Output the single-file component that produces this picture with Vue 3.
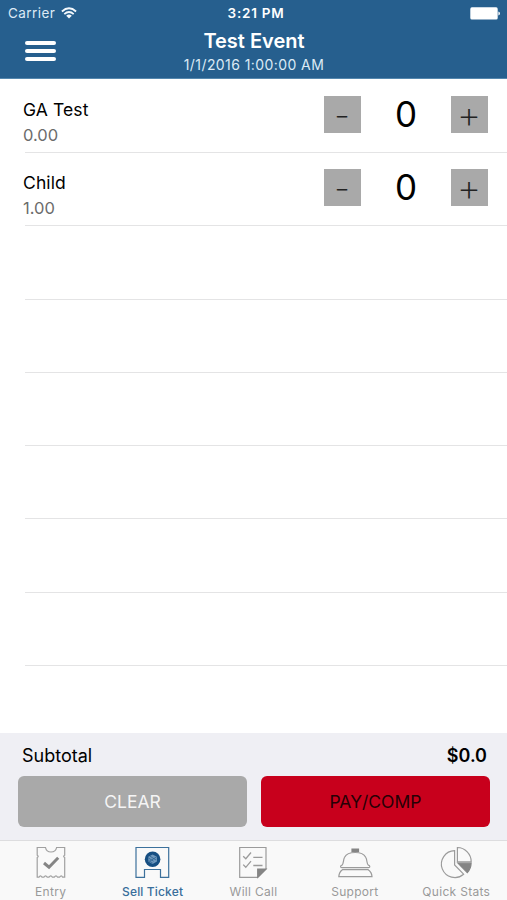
<script setup>
import { reactive, computed } from 'vue'

const tickets = reactive([
  { name: 'GA Test', price: '0.00', count: 0 },
  { name: 'Child', price: '1.00', count: 0 },
])
const emptyRows = 7
const subtotal = computed(() =>
  tickets.reduce((sum, t) => sum + Number(t.price) * t.count, 0).toFixed(1)
)
</script>

<template>
  <div class="screen">
    <header class="header">
      <div class="status">
        <div class="carrier">
          <span class="carrier-name">Carrier</span>
          <svg class="wifi" width="16" height="12" viewBox="0 0 16 12" fill="none" stroke="#f4f9fd" stroke-width="1.8">
            <path d="M.9 4.5Q8-1.9 15.1 4.5" />
            <path d="M3.3 7.1Q8 2.9 12.7 7.1" />
            <path d="M8 11.5L5.2 8.7Q8 6.4 10.8 8.7Z" fill="#f4f9fd" stroke="none" />
          </svg>
        </div>
        <span class="clock">3:21 PM</span>
        <svg class="battery" width="31" height="13" viewBox="0 0 31 13" fill="#fff">
          <rect x=".3" y=".3" width="27.4" height="12.2" rx="1.6" />
          <path d="M28.4 4.4Q30 4.8 30 6.4T28.4 8.4Z" />
        </svg>
      </div>
      <div class="nav">
        <button class="menu" aria-label="Menu"><i></i><i></i><i></i></button>
        <div class="titles">
          <h1>Test Event</h1>
          <p>1/1/2016 1:00:00 AM</p>
        </div>
        <span></span>
      </div>
    </header>

    <main class="list">
      <div v-for="t in tickets" :key="t.name" class="row">
        <div class="info">
          <span class="name">{{ t.name }}</span>
          <span class="price">{{ t.price }}</span>
        </div>
        <div class="stepper">
          <button class="step minus" @click="t.count = Math.max(0, t.count - 1)"><span>-</span></button>
          <span class="count">{{ t.count }}</span>
          <button class="step plus" @click="t.count++"><span>+</span></button>
        </div>
      </div>
      <div v-for="n in emptyRows" :key="n" class="row" :class="{ last: n === emptyRows }"></div>
    </main>

    <section class="summary">
      <div class="subtotal">
        <span class="sub-label">Subtotal</span>
        <span class="sub-value">${{ subtotal }}</span>
      </div>
      <div class="actions">
        <button class="action clear"><span>CLEAR</span></button>
        <button class="action pay"><span>PAY/COMP</span></button>
      </div>
    </section>

    <nav class="tabs">
      <a class="tab entry">
        <svg width="36" height="34" viewBox="0 0 36 34" fill="none" stroke="#a0a0a0" stroke-width="1.2">
          <path d="M4.2 1.5H12.5Q13.3 6 18 6T23.6 1.5H31.7V9.2Q29.6 10.3 31.7 11.5V31.2H29.6Q28.4 28.6 26.6 31.2H24.6Q23 28.6 21.3 31.2H19.4Q17.8 28.6 16 31.2H14.2Q12.5 28.6 10.9 31.2H9Q7.4 28.6 6 31.2H4.2V11.5Q6.2 10.3 4.2 9.2Z" />
          <path d="M11 17L16 21.2L25.2 11.8" stroke="#858585" stroke-width="3" />
        </svg>
        <span>Entry</span>
      </a>
      <a class="tab sell">
        <svg width="36" height="34" viewBox="0 0 36 34" fill="none">
          <path d="M2 1.5H34.7V31.3H26.5V23.5H10.5V31.3H2Z" stroke="#3c719c" stroke-width="1.2" />
          <circle cx="18.6" cy="13.2" r="7.8" fill="#174f82" />
          <path d="M18.6 8.4L22.9 10.8V15.5L18.6 18L14.3 15.5V10.8Z" fill="#7199bd" />
          <path d="M14.4 12L19.6 15.2M16 10.2L22 14M14.6 14.6L18.6 17M22.4 11L15.4 15.4" stroke="#2c6291" stroke-width=".8" />
        </svg>
        <span>Sell Ticket</span>
      </a>
      <a class="tab will">
        <svg width="36" height="34" viewBox="0 0 36 34" fill="none" stroke="#9b9b9b" stroke-width="1.2">
          <path d="M4.7 1.5H31V23L22.7 31.3H4.7Z" />
          <path d="M22.7 31.3V23H31Z" fill="#858585" stroke="#858585" />
          <path d="M8.2 10.2L10.8 12.7L16 6.5M8.2 18.6L10.8 21.3L16 15.2M18.3 11.3H27.5M18.3 19.5H27.5" stroke-width="1.3" />
        </svg>
        <span>Will Call</span>
      </a>
      <a class="tab support">
        <svg width="36" height="34" viewBox="0 0 36 34" fill="none" stroke="#9b9b9b" stroke-width="1.2">
          <path d="M15 3H21.5V5.3H15Z" fill="#858585" stroke="#858585" />
          <path d="M5 21.7C3 21.7 3.3 19.6 5 19.2C6.8 18 6 14 7.6 11.2C9.6 7.4 13.6 6.5 18.2 6.5S26.6 7.4 28.7 11.2C30.4 14 29.5 18 31.4 19.2C33.2 19.6 33.3 21.7 31.4 21.7Z" />
          <path d="M5.4 23.7H31.2C33.4 25.2 34.8 27.5 35 30.6H1.8C2 27.5 3.2 25.2 5.4 23.7Z" />
        </svg>
        <span>Support</span>
      </a>
      <a class="tab stats">
        <svg width="36" height="34" viewBox="0 0 36 34" fill="none" stroke="#9b9b9b" stroke-width="1.2">
          <path d="M16.6 4.7A13.4 13.4 0 1 0 25.6 28.2L16.6 19Z" />
          <path d="M19.4 1.5A14.2 14.2 0 0 1 33.2 15.8H19.4Z" />
          <path d="M20 17.2H33.1Q33 22.5 29.3 26.6Z" fill="#858585" stroke="#858585" />
        </svg>
        <span>Quick Stats</span>
      </a>
    </nav>
  </div>
</template>

<style>
body { margin: 0; background: #fff; }
</style>

<style scoped>
.screen {
  width: 507px;
  height: 900px;
  display: flex;
  flex-direction: column;
  overflow: hidden;
  background: #fff;
  font-family: Inter, "Liberation Sans", sans-serif;
  color: #000;
}
button { border: 0; padding: 0; margin: 0; font: inherit; color: inherit; background: none; }
span { white-space: nowrap; }

.header { height: 79px; box-sizing: border-box; flex: none; background: #265f8e; border-bottom: 1px solid #5487ae; color: #fff; }
.status { height: 27px; display: grid; grid-template-columns: 1fr auto 1fr; align-items: center; padding: 0 6px 0 8px; }
.carrier { display: flex; align-items: center; gap: 6px; color: #dceaf5; }
.carrier-name { font-size: 13.5px; letter-spacing: .45px; line-height: 27px; }
.wifi { margin-bottom: 2px; }
.clock { font-size: 13.5px; font-weight: 600; line-height: 27px; letter-spacing: .75px; padding-left: 3px; }
.battery { justify-self: end; }
.nav { height: 51px; display: grid; grid-template-columns: 1fr auto 1fr; }
.menu { display: flex; flex-direction: column; gap: 4px; margin: 14px 0 0 25px; width: 31px; height: 21px; }
.menu i { height: 4px; border-radius: 2px; background: #fff; }
.titles { text-align: center; padding-left: 1px; }
h1 { margin: 1px 0 0; font-size: 20px; font-weight: 600; line-height: 26px; }
p { margin: 0; font-size: 14px; line-height: 22px; letter-spacing: .42px; color: #dceaf5; }

.list { height: 654px; flex: none; display: grid; grid-template-rows: 74px repeat(7, 73.25px) 1fr; }
.row { margin-left: 25px; border-bottom: 1px solid #e4e4e5; box-sizing: border-box; display: flex; justify-content: space-between; min-height: 0; }
.row + .row { margin-top: -1px; }
.row.last { border-bottom: 0; }
.info { display: flex; flex-direction: column; margin-left: -2px; padding-top: 18px; }
.name { font-size: 17.5px; line-height: 25px; letter-spacing: .1px; }
.price { font-size: 16.5px; line-height: 26px; color: #6c6c6c; }
.stepper { display: grid; grid-template-columns: 37px 90px 37px; padding: 17px 19px 0 0; }
.step { height: 37px; display: flex; align-items: center; justify-content: center; background: #a9a9a9; color: #222; }
.minus span { font-weight: 200; font-size: 36px; line-height: 37px; margin: 1px 1px 0 0; }
.plus span { font-weight: 200; font-size: 38px; line-height: 37px; margin: -1px 1px 0 0; }
.count { text-align: center; font-size: 35px; line-height: 36px; }

.summary { height: 107px; flex: none; box-sizing: border-box; background: #efeff4; padding: 10px 17px 0 18px; }
.subtotal { display: flex; justify-content: space-between; align-items: center; height: 25px; padding: 0 3px 0 4px; font-size: 18px; }
.sub-value { font-weight: 600; }
.actions { display: grid; grid-template-columns: 229px 229px; gap: 14px; margin-top: 8px; }
.action { height: 51px; border-radius: 6px; font-size: 17.5px; text-align: center; }
.clear { background: #a9a9a9; color: #f5f5f5; }
.pay { background: #c8001c; color: #260005; }

.tabs { flex: 1; box-sizing: border-box; border-top: 1px solid #dddddf; background: #f9f9f9; display: grid; grid-template-columns: repeat(5, 1fr); }
.tab { display: flex; flex-direction: column; align-items: center; padding-top: 5px; font-size: 12px; color: #999; }
.tab svg { flex: none; }
.tab span { line-height: 20px; margin-top: 2px; letter-spacing: .3px; }
.tab.sell { color: #386e9b; }
.sell span { font-weight: 500; letter-spacing: .15px; margin-left: 1px; }
</style>
